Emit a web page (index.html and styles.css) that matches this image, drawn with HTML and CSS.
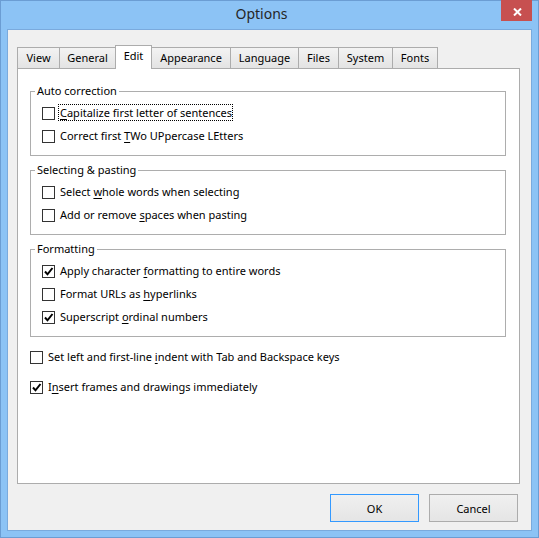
FILE: index.html
```html
<!DOCTYPE html>
<html>
<head>
<meta charset="utf-8">
<title>Options</title>
<link rel="stylesheet" href="styles.css">
</head>
<body>
<div class="window">
  <div class="titlebar">
    <span class="title">Options</span>
    <div class="close"><svg width="9" height="8" viewBox="0 0 9 8"><path d="M1 0.5 L8 7.5 M8 0.5 L1 7.5" stroke="#fff" stroke-width="2" fill="none"/></svg></div>
  </div>
  <div class="client">
    <div class="tabs">
      <div class="tab tab-view">View</div>
      <div class="tab tab-general">General</div>
      <div class="tab tab-edit selected">Edit</div>
      <div class="tab tab-appearance">Appearance</div>
      <div class="tab tab-language">Language</div>
      <div class="tab tab-files">Files</div>
      <div class="tab tab-system">System</div>
      <div class="tab tab-fonts">Fonts</div>
    </div>
    <div class="pane">
      <fieldset class="group first">
        <legend>Auto correction</legend>
        <div class="row"><span class="box"></span><span class="label focus"><u>C</u>apitalize first letter of sentences</span></div>
        <div class="row"><span class="box"></span><span class="label">Correct first <u>T</u>Wo UPpercase LEtters</span></div>
      </fieldset>
      <fieldset class="group">
        <legend>Selecting &amp; pasting</legend>
        <div class="row"><span class="box"></span><span class="label">Select <u>w</u>hole words when selecting</span></div>
        <div class="row"><span class="box"></span><span class="label">Add or remove <u>s</u>paces when pasting</span></div>
      </fieldset>
      <fieldset class="group">
        <legend>Formatting</legend>
        <div class="row"><span class="box"><svg width="11" height="11" viewBox="0 0 11 11"><polyline points="2,5.5 4.5,8.3 9.5,2" fill="none" stroke="#000" stroke-width="2"/></svg></span><span class="label">Apply character <u>f</u>ormatting to entire words</span></div>
        <div class="row"><span class="box"></span><span class="label">Format URLs as <u>h</u>yperlinks</span></div>
        <div class="row"><span class="box"><svg width="11" height="11" viewBox="0 0 11 11"><polyline points="2,5.5 4.5,8.3 9.5,2" fill="none" stroke="#000" stroke-width="2"/></svg></span><span class="label">Superscript <u>o</u>rdinal numbers</span></div>
      </fieldset>
      <div class="extra">
        <div class="row"><span class="box"></span><span class="label">Set left and first-line <u>i</u>ndent with Tab and Backspace keys</span></div>
        <div class="row"><span class="box"><svg width="11" height="11" viewBox="0 0 11 11"><polyline points="2,5.5 4.5,8.3 9.5,2" fill="none" stroke="#000" stroke-width="2"/></svg></span><span class="label">I<u>n</u>sert frames and drawings immediately</span></div>
      </div>
    </div>
    <div class="buttons">
      <button class="btn default">OK</button>
      <button class="btn">Cancel</button>
    </div>
  </div>
</div>
</body>
</html>
```

FILE: styles.css
```css
html, body {
  margin: 0;
  padding: 0;
}
body {
  font-family: "Noto Sans", "Open Sans", sans-serif;
  font-size: 11px;
  color: #000;
  background: #fff;
}
.window {
  width: 539px;
  height: 538px;
  box-sizing: border-box;
  border: 1px solid #6b9dd3;
  background: #8cc3f5;
  padding: 0 6px 6px;
  display: flex;
  flex-direction: column;
}
.titlebar {
  height: 28px;
  flex: none;
  position: relative;
  display: flex;
  align-items: center;
  justify-content: center;
  padding-right: 16px;
}
.title {
  font-size: 14px;
  color: #262626;
  line-height: 20px;
  margin-top: -2px;
}
.close {
  position: absolute;
  top: -1px;
  right: 0;
  width: 31px;
  height: 21px;
  background: #c75050;
  display: flex;
  align-items: center;
  justify-content: center;
  padding-top: 2px;
  box-sizing: border-box;
}
.close svg {
  display: block;
  margin-left: 2px;
}
.client {
  flex: 1;
  border: 1px solid #7aaadd;
  background: #f0f0f0;
  padding: 15px 11px 8px 9px;
  display: flex;
  flex-direction: column;
}
.tabs {
  display: flex;
  align-items: flex-end;
  height: 23px;
  position: relative;
  z-index: 1;
}
.tab {
  box-sizing: border-box;
  height: 21px;
  border: 1px solid #acacac;
  border-bottom: none;
  margin-right: -1px;
  background: linear-gradient(#f3f3f3, #e3e3e3);
  text-align: center;
  line-height: 19px;
  white-space: nowrap;
}
.tab.selected {
  height: 24px;
  margin-bottom: -1px;
  background: #fff;
  position: relative;
  z-index: 2;
  padding-bottom: 3px;
  line-height: 19px;
}
.tab-view { width: 43px; }
.tab-general { width: 57px; }
.tab-edit { width: 37px; }
.tab-appearance { width: 80px; }
.tab-language { width: 69px; }
.tab-files { width: 41px; }
.tab-system { width: 55px; }
.tab-fonts { width: 46px; }
.pane {
  width: 503px;
  height: 416px;
  box-sizing: border-box;
  border: 1px solid #acacac;
  background: #fff;
  padding: 0 13px 0 12px;
}
.group {
  margin: 6px 0 0;
  padding: 2px 8px 7px 4px;
  border: 1px solid #adadad;
  min-width: 0;
}
.group.first {
  margin-top: 14px;
}
.group legend {
  padding: 0 2px 2px;
  line-height: 15px;
  height: 17px;
  box-sizing: border-box;
}
.row {
  height: 23px;
  display: flex;
  align-items: center;
  gap: 5px;
  padding-left: 7px;
  white-space: nowrap;
}
.extra {
  margin-top: 9px;
  display: flex;
  flex-direction: column;
  gap: 7px;
}
.extra .row {
  padding-left: 0;
}
.box {
  width: 13px;
  height: 13px;
  box-sizing: border-box;
  border: 1px solid #333;
  background: #fff;
  flex: none;
}
.box svg {
  display: block;
}
.label {
  line-height: 15px;
  margin-top: -2px;
}
.label u {
  text-decoration-thickness: 1px;
  text-underline-offset: 2px;
}
.focus {
  outline: 1px dotted #000;
  margin-left: -1px;
  padding-left: 1px;
}
.buttons {
  display: flex;
  justify-content: flex-end;
  gap: 10px;
  margin-top: 10px;
  padding-right: 2px;
}
.btn {
  width: 89px;
  height: 28px;
  box-sizing: border-box;
  border: 1px solid #acacac;
  background: linear-gradient(#f0f0f0, #e5e5e5);
  font-family: inherit;
  font-size: 11px;
  color: #000;
  padding: 0;
  margin: 0;
}
.btn.default {
  border-color: #3399ff;
}
```
